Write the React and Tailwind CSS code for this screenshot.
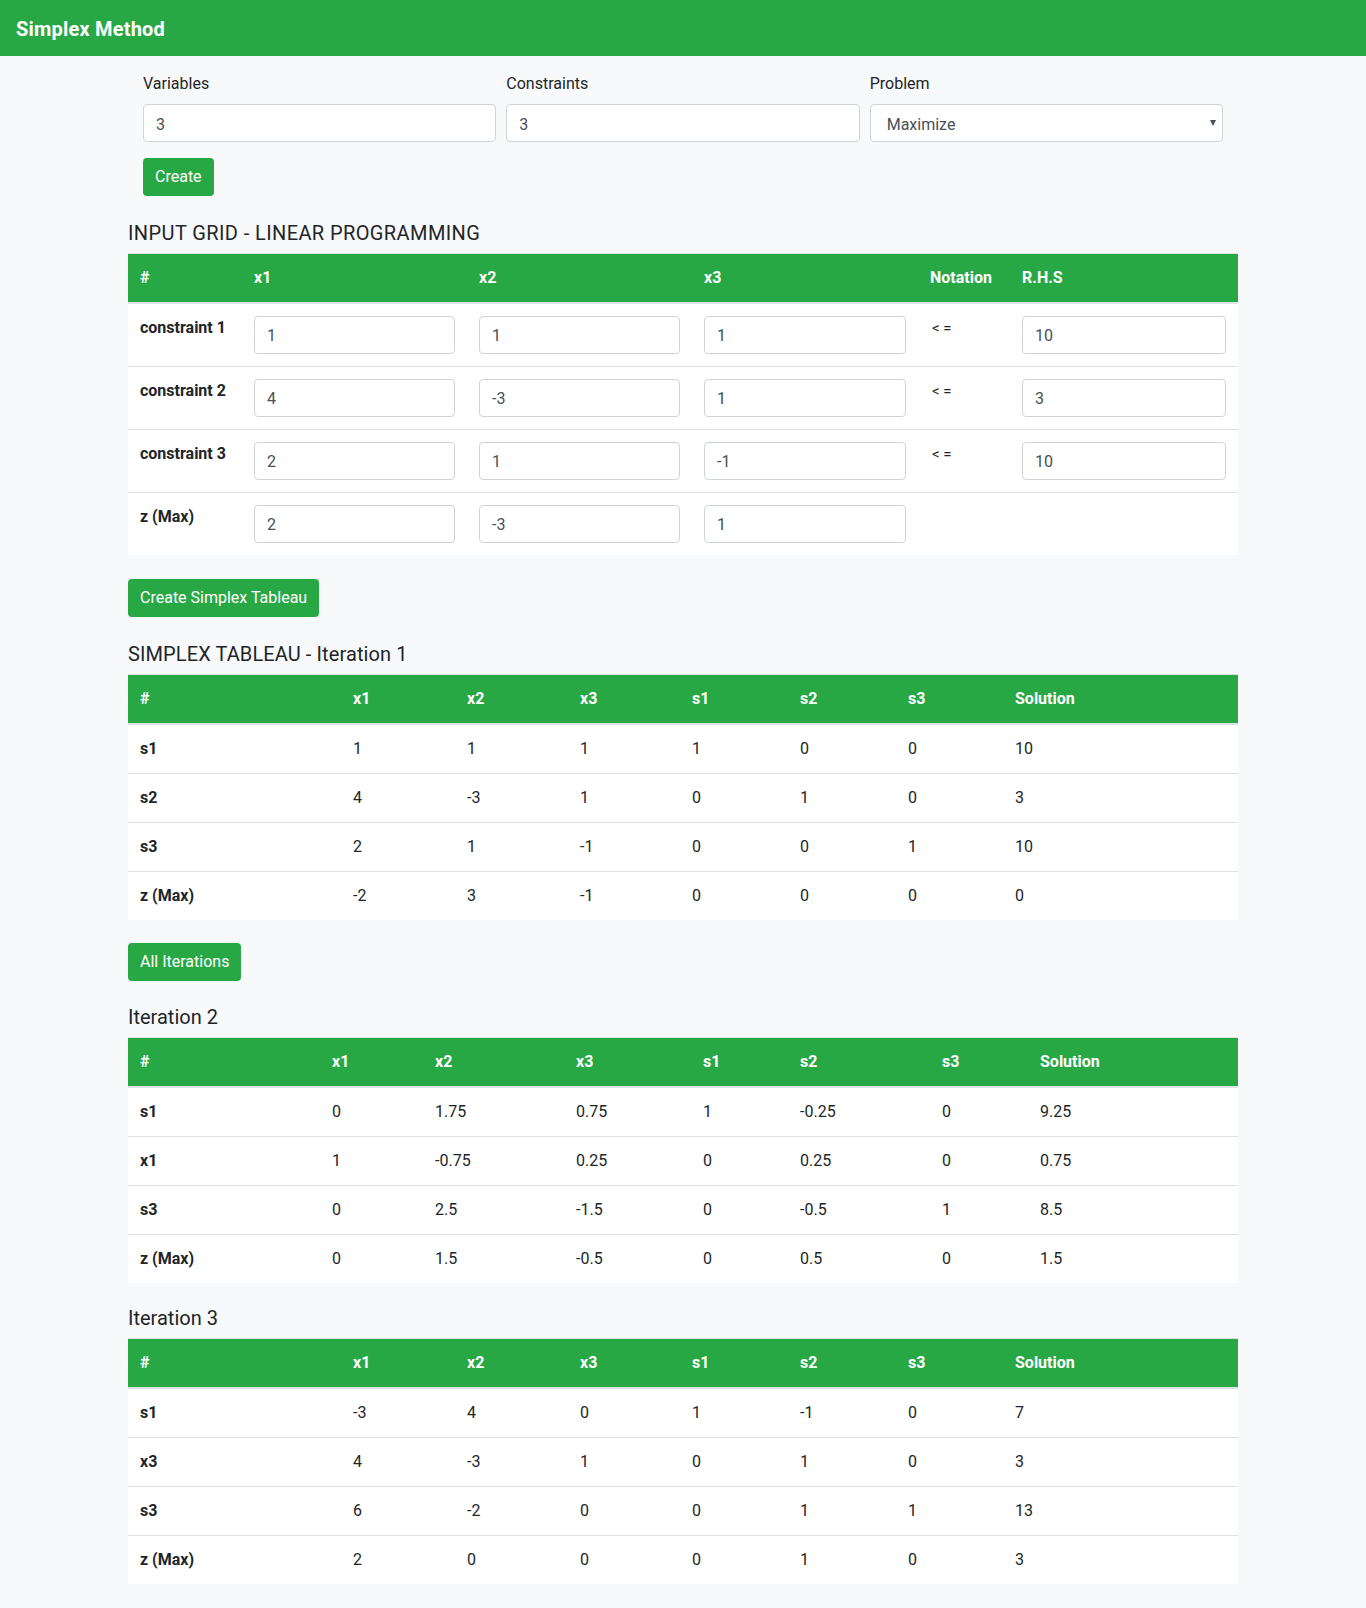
import React, { useState } from 'react';

const font = { fontFamily: '"Segoe UI", Roboto, "Helvetica Neue", Arial, sans-serif' };

const inputRows = [
    { label: 'constraint 1', vals: ['1', '1', '1'], rhs: '10' },
    { label: 'constraint 2', vals: ['4', '-3', '1'], rhs: '3' },
    { label: 'constraint 3', vals: ['2', '1', '-1'], rhs: '10' },
    { label: 'z (Max)', vals: ['2', '-3', '1'], rhs: null },
];

const heads = ['#', 'x1', 'x2', 'x3', 's1', 's2', 's3', 'Solution'];

// column widths measured off the page, tables are 1110 wide
const wideCols = ['w-[213px]', 'w-[114px]', 'w-[113px]', 'w-[112px]', 'w-[108px]', 'w-[108px]', 'w-[107px]', 'w-[235px]'];
const iter2Cols = ['w-[192px]', 'w-[103px]', 'w-[141px]', 'w-[127px]', 'w-[97px]', 'w-[142px]', 'w-[98px]', 'w-[210px]'];

const iterations = [
    {
        title: 'Iteration 2',
        cols: iter2Cols,
        rows: [
            ['s1', '0', '1.75', '0.75', '1', '-0.25', '0', '9.25'],
            ['x1', '1', '-0.75', '0.25', '0', '0.25', '0', '0.75'],
            ['s3', '0', '2.5', '-1.5', '0', '-0.5', '1', '8.5'],
            ['z (Max)', '0', '1.5', '-0.5', '0', '0.5', '0', '1.5'],
        ],
    },
    {
        title: 'Iteration 3',
        cols: wideCols,
        rows: [
            ['s1', '-3', '4', '0', '1', '-1', '0', '7'],
            ['x3', '4', '-3', '1', '0', '1', '0', '3'],
            ['s3', '6', '-2', '0', '0', '1', '1', '13'],
            ['z (Max)', '2', '0', '0', '0', '1', '0', '3'],
        ],
    },
];

const firstTableau = [
    ['s1', '1', '1', '1', '1', '0', '0', '10'],
    ['s2', '4', '-3', '1', '0', '1', '0', '3'],
    ['s3', '2', '1', '-1', '0', '0', '1', '10'],
    ['z (Max)', '-2', '3', '-1', '0', '0', '0', '0'],
];

const inputCls = 'h-[38px] w-full rounded-[4px] border border-[#ced4da] bg-white px-3 text-[16px] text-[#495057] outline-none';
const btnCls = 'h-[38px] rounded-[4px] bg-[#28a745] px-3 text-[16px] text-white';
const thCls = 'border-t border-b-2 border-[#dee2e6] bg-[#28a745] p-3 text-left align-bottom text-[16px] font-bold leading-6 text-white';
const tdCls = 'border-t border-[#dee2e6] p-3 text-left align-top text-[16px] leading-6';

function Tableau({ cols, rows }) {
    return (
        <table className="w-[1110px] table-fixed bg-white text-[#212529]">
            <colgroup>
                {cols.map((c, i) => <col key={i} className={c} />)}
            </colgroup>
            <thead>
                <tr>
                    {heads.map(h => <th key={h} className={thCls}>{h}</th>)}
                </tr>
            </thead>
            <tbody>
                {rows.map(r => (
                    <tr key={r[0]}>
                        {r.map((v, i) => (
                            <td key={i} className={`${tdCls} ${i === 0 ? 'font-bold' : ''}`}>{v}</td>
                        ))}
                    </tr>
                ))}
            </tbody>
        </table>
    );
}

export default function App() {
    const [vars, setVars] = useState('3');
    const [cons, setCons] = useState('3');

    return (
        <div className="min-h-[1608px] bg-[#f8f9fa] text-[#212529]" style={font}>
            {/* Navbar */}
            <nav className="flex h-[56px] items-center bg-[#28a745] px-4 pt-[2px]">
                <span className="text-[20px] font-bold tracking-[0.2px] text-white">Simplex Method</span>
            </nav>

            <div className="mx-auto w-[1110px] pb-[23px]">
                {/* setup form */}
                <div className="px-[15px] pt-4">
                    <div className="grid grid-cols-3 gap-x-[10px]">
                        <div>
                            <label className="mb-2 block text-[16px] leading-6">Variables</label>
                            <input className={`${inputCls} pt-[2px]`} value={vars} onChange={e => setVars(e.target.value)} />
                        </div>
                        <div>
                            <label className="mb-2 block text-[16px] leading-6">Constraints</label>
                            <input className={`${inputCls} pt-[2px]`} value={cons} onChange={e => setCons(e.target.value)} />
                        </div>
                        <div>
                            <label className="mb-2 block text-[16px] leading-6">Problem</label>
                            <div className="relative">
                                <select className={`${inputCls} appearance-none !pl-4 pt-[3px]`} defaultValue="max">
                                    <option value="max">Maximize</option>
                                    <option value="min">Minimize</option>
                                </select>
                                <svg className="pointer-events-none absolute right-[7px] top-[16px]" width="6" height="6" viewBox="0 0 6 6">
                                    <path d="M0 0 L6 0 L3 6 Z" fill="#495057" />
                                </svg>
                            </div>
                        </div>
                    </div>
                    <button className={`${btnCls} mt-4`}>Create</button>
                </div>

                {/* input grid */}
                <h5 className="mt-[25px] mb-2 text-[20px] leading-6 tracking-[0.4px]">INPUT GRID - LINEAR PROGRAMMING</h5>
                <table className="w-[1110px] table-fixed bg-white">
                    <colgroup>
                        <col className="w-[114px]" />
                        <col className="w-[225px]" />
                        <col className="w-[225px]" />
                        <col className="w-[226px]" />
                        <col className="w-[92px]" />
                        <col className="w-[228px]" />
                    </colgroup>
                    <thead>
                        <tr>
                            {['#', 'x1', 'x2', 'x3', 'Notation', 'R.H.S'].map(h => <th key={h} className={thCls}>{h}</th>)}
                        </tr>
                    </thead>
                    <tbody>
                        {inputRows.map(r => (
                            <tr key={r.label}>
                                <td className={`${tdCls} font-bold`}>{r.label}</td>
                                {r.vals.map((v, i) => (
                                    <td key={i} className={tdCls}>
                                        <input className={inputCls} defaultValue={v} />
                                    </td>
                                ))}
                                <td className={`${tdCls} !text-[15px] !pl-[14px]`}>{r.rhs !== null ? '< =' : ''}</td>
                                <td className={tdCls}>
                                    {r.rhs !== null && <input className={inputCls} defaultValue={r.rhs} />}
                                </td>
                            </tr>
                        ))}
                    </tbody>
                </table>

                <button className={`${btnCls} mt-[24px]`}>Create Simplex Tableau</button>

                <h5 className="mt-[25px] mb-2 text-[20px] leading-6 tracking-[0.1px]">SIMPLEX TABLEAU - Iteration 1</h5>
                <Tableau cols={wideCols} rows={firstTableau} />

                <button className={`${btnCls} mt-[23px]`}>All Iterations</button>

                {iterations.map((it, idx) => (
                    <div key={it.title} className={idx === 0 ? 'mt-[24px]' : 'mt-[23px]'}>
                        <h4 className="mb-2 text-[20px] leading-6">{it.title}</h4>
                        <Tableau cols={it.cols} rows={it.rows} />
                    </div>
                ))}
            </div>
        </div>
    );
}
